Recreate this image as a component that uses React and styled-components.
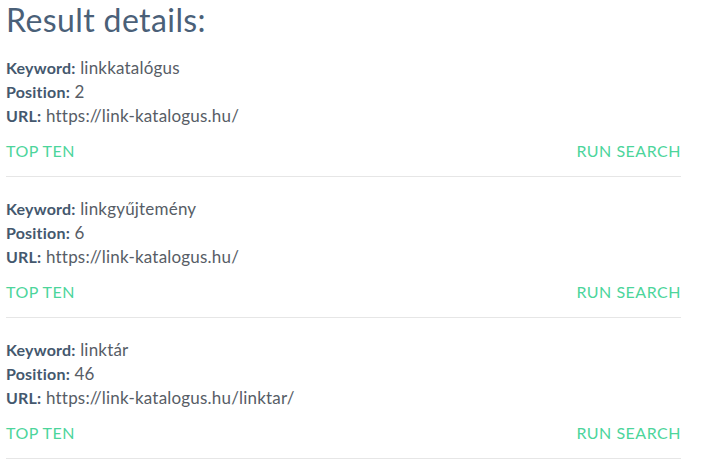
import React from 'react';
import styled, { createGlobalStyle } from 'styled-components';

const GlobalStyle = createGlobalStyle`
  body {
    margin: 0;
    background: #ffffff;
    font-family: 'Lato', 'Noto Sans', sans-serif;
  }
`;

const Page = styled.div`
  width: 675px;
  padding: 0 0 0 6px;
`;

const Title = styled.h1`
  margin: 0;
  font-size: 32px;
  font-weight: 400;
  line-height: 39px;
  letter-spacing: 0.4px;
  color: #4a6078;
`;

const Result = styled.div`
  padding-top: ${(p) => (p.$first ? 17 : 20)}px;
  border-bottom: 1px solid #e6e6e6;
`;

const Line = styled.div`
  font-size: 17px;
  line-height: 24px;
  letter-spacing: 0.2px;
  color: #575d66;
`;

const Label = styled.span`
  font-weight: 700;
  font-size: 16px;
  color: #44586e;
`;

const Actions = styled.div`
  display: flex;
  justify-content: space-between;
  padding: 12px 0 14px;
`;

const ActionLink = styled.a`
  font-size: 16px;
  line-height: 22px;
  letter-spacing: 0.5px;
  color: #4cd59b;
  text-transform: uppercase;
  text-decoration: none;
  cursor: pointer;
`;

const results = [
  { keyword: 'linkkatalógus', position: 2, url: 'https://link-katalogus.hu/' },
  { keyword: 'linkgyűjtemény', position: 6, url: 'https://link-katalogus.hu/' },
  { keyword: 'linktár', position: 46, url: 'https://link-katalogus.hu/linktar/' },
];

export default function App() {
  return (
    <>
      <GlobalStyle />
      <Page>
        <Title>Result details:</Title>
        {results.map((r, i) => (
          <Result key={r.keyword} $first={i === 0}>
            <Line><Label>Keyword:</Label> {r.keyword}</Line>
            <Line><Label>Position:</Label> {r.position}</Line>
            <Line><Label>URL:</Label> {r.url}</Line>
            <Actions>
              <ActionLink>Top ten</ActionLink>
              <ActionLink>Run search</ActionLink>
            </Actions>
          </Result>
        ))}
      </Page>
    </>
  );
}
